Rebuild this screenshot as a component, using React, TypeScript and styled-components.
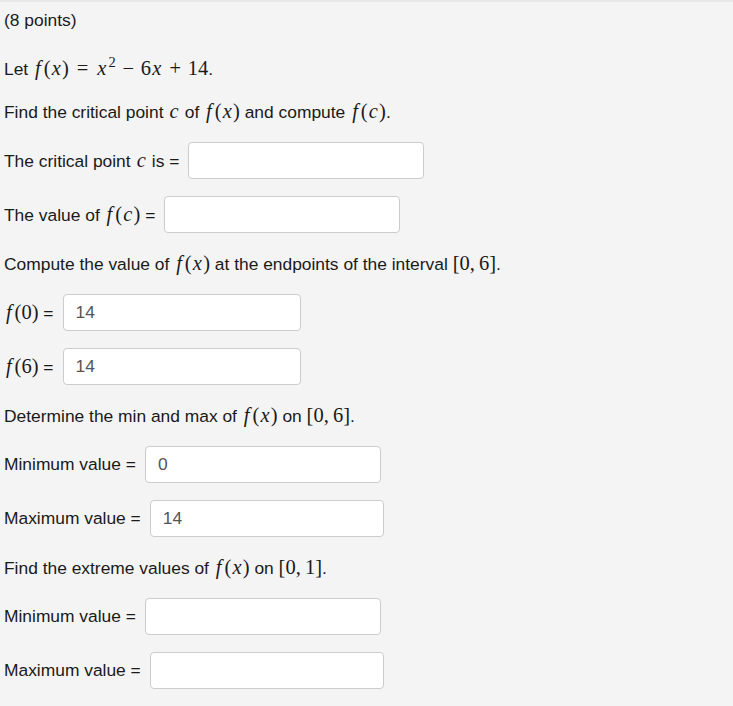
import React, { Fragment } from 'react';
import styled, { createGlobalStyle } from 'styled-components';

const GlobalStyle = createGlobalStyle`
  html, body {
    margin: 0;
    padding: 0;
    background: #f4f4f4;
  }
`;

const Page = styled.div`
  box-sizing: border-box;
  min-height: 706px;
  border-top: 2px solid #e9e9e9;
  padding: 5px 4px 0;
  font-family: 'Liberation Sans', Arial, sans-serif;
  font-size: 17.4px;
  color: #1a1a1a;
  display: flex;
  flex-direction: column;
  gap: 17px;
`;

const Line = styled.div<{ $extra?: number }>`
  height: 27px;
  line-height: 27px;
  white-space: nowrap;
  margin-top: ${(p) => p.$extra || 0}px;
`;

const Row = styled.div`
  height: 37px;
  display: flex;
  align-items: center;
`;

const Label = styled.span`
  white-space: nowrap;
`;

const M = styled.span`
  font-family: 'Liberation Serif', 'Times New Roman', serif;
  font-size: 20.5px;
`;

const I = styled.i<{ $l?: number; $r?: number }>`
  font-style: italic;
  margin-left: ${(p) => p.$l ?? 0.06}em;
  margin-right: ${(p) => p.$r ?? 0.06}em;
`;

const Op = styled.span<{ $s?: number }>`
  margin: 0 ${(p) => p.$s ?? 0.33}em;
`;

const Sup = styled.sup`
  font-size: 14.5px;
  vertical-align: 8px;
  line-height: 0;
  margin-left: 1px;
`;

const Field = styled.div<{ $w?: number }>`
  box-sizing: border-box;
  flex: none;
  width: ${(p) => p.$w || 236}px;
  height: 37px;
  margin-left: 9px;
  background: #fff;
  border: 1px solid #cccccc;
  border-radius: 4px;
  padding: 0 12px;
  display: flex;
  align-items: center;
  color: #555;
  font-family: 'Liberation Sans', Arial, sans-serif;
  font-size: 17.4px;
`;

const F = () => <I $l={0.1} $r={0.14}>f</I>;

const Fx = ({ v }: { v: string }) => (
  <M>
    <F />(<I>{v}</I>)
  </M>
);

const Fn = ({ v }: { v: string }) => (
  <M>
    <F />({v})
  </M>
);

const Interval = ({ b }: { b: string }) => (
  <M>
    [0,<Op $s={0.1} />
    {b}]
  </M>
);

const App = () => (
  <Fragment>
    <GlobalStyle />
    <Page>
      <Line>(8 points)</Line>
      <Line $extra={4}>
        Let{' '}
        <M>
          <F />(<I>x</I>)<Op $s={0.38}>=</Op>
          <I>x</I>
          <Sup>2</Sup>
          <Op>−</Op>6<I>x</I>
          <Op>+</Op>14
        </M>
        .
      </Line>
      <Line $extra={-1}>
        Find the critical point <M><I>c</I></M> of <Fx v="x" /> and compute <Fx v="c" />.
      </Line>
      <Row>
        <Label>
          The critical point <M><I>c</I></M> is =
        </Label>
        <Field />
      </Row>
      <Row>
        <Label>
          The value of <Fx v="c" /> =
        </Label>
        <Field />
      </Row>
      <Line>
        Compute the value of <Fx v="x" /> at the endpoints of the interval <Interval b="6" />.
      </Line>
      <Row>
        <Label>
          <Fn v="0" /> =
        </Label>
        <Field $w={238}>14</Field>
      </Row>
      <Row>
        <Label>
          <Fn v="6" /> =
        </Label>
        <Field $w={238}>14</Field>
      </Row>
      <Line>
        Determine the min and max of <Fx v="x" /> on <Interval b="6" />.
      </Line>
      <Row>
        <Label>Minimum value =</Label>
        <Field>0</Field>
      </Row>
      <Row>
        <Label>Maximum value =</Label>
        <Field $w={234}>14</Field>
      </Row>
      <Line>
        Find the extreme values of <Fx v="x" /> on <Interval b="1" />.
      </Line>
      <Row>
        <Label>Minimum value =</Label>
        <Field />
      </Row>
      <Row>
        <Label>Maximum value =</Label>
        <Field $w={234} />
      </Row>
    </Page>
  </Fragment>
);

export default App;
